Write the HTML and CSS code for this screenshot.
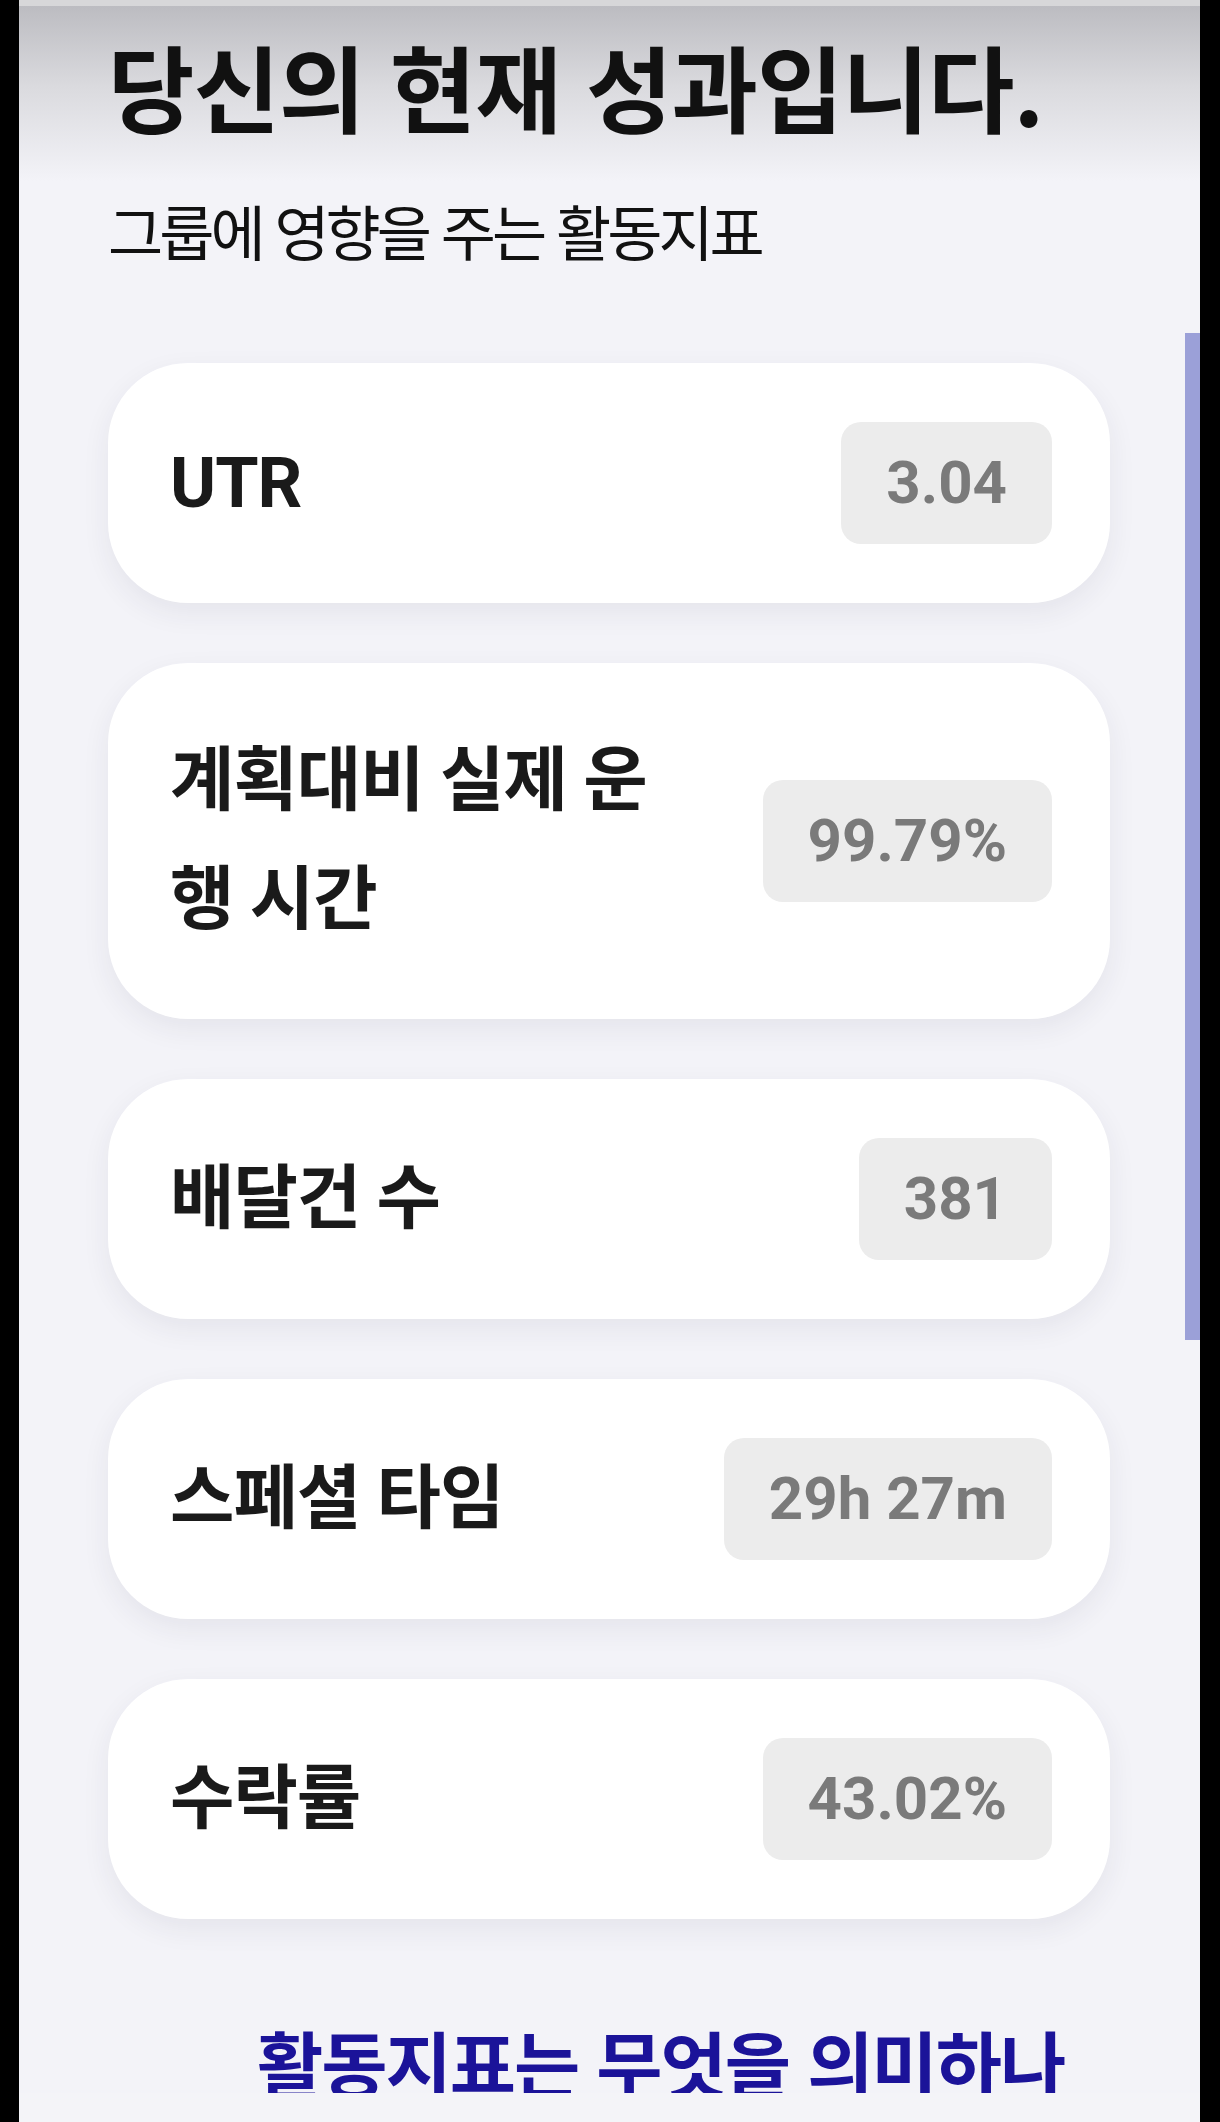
FILE: index.html
```html
<!DOCTYPE html>
<html lang="ko">
<head>
<meta charset="utf-8">
<title>성과</title>
<link rel="stylesheet" href="styles.css">
</head>
<body>
<div class="frame">
  <div class="status-strip"></div>
  <main class="scroller">
    <header class="intro">
      <h1 class="title">당신의 현재 성과입니다.</h1>
      <p class="subtitle">그룹에 영향을 주는 활동지표</p>
    </header>
    <section class="metrics">
      <article class="metric"><span class="metric-label">UTR</span><span class="metric-value">3.04</span></article>
      <article class="metric"><span class="metric-label">계획대비 실제 운행 시간</span><span class="metric-value">99.79%</span></article>
      <article class="metric"><span class="metric-label">배달건 수</span><span class="metric-value">381</span></article>
      <article class="metric"><span class="metric-label">스페셜 타임</span><span class="metric-value">29h 27m</span></article>
      <article class="metric"><span class="metric-label">수락률</span><span class="metric-value">43.02%</span></article>
    </section>
    <h2 class="explain">활동지표는 무엇을 의미하나</h2>
  </main>
  <div class="bottom-strip"></div>
  <div class="scroll-thumb"></div>
</div>
</body>
</html>
```
FILE: styles.css
```css
html, body {
  margin: 0;
  padding: 0;
  background: #000;
  height: 2122px;
  overflow: hidden;
}

.frame {
  position: relative;
  margin-left: 19px;
  width: 1181px;
  height: 2122px;
  display: flex;
  flex-direction: column;
  background: #f3f3f8;
}

.status-strip {
  height: 6px;
  flex-shrink: 0;
  background: #d7d7d9;
}

.scroller {
  flex: 1;
  min-height: 0;
  overflow: hidden;
  padding: 23px 90px 0 89px;
  background: linear-gradient(to bottom, #bcbcc1 0px, #dadade 80px, #f3f3f8 175px) no-repeat, #f3f3f8;
}

.bottom-strip {
  height: 29px;
  flex-shrink: 0;
  background: #f4f4f8;
}

.scroll-thumb {
  position: absolute;
  right: 0;
  top: 333px;
  width: 15px;
  height: 1007px;
  background: #9ba0d8;
}

.intro {
  display: flex;
  flex-direction: column;
}

.title {
  margin: 0;
  font-family: "Noto Sans CJK KR", "Noto Sans", sans-serif;
  font-weight: 700;
  font-size: 94px;
  line-height: 113px;
  letter-spacing: -1px;
  color: #111;
}

.subtitle {
  margin: 48px 0 0;
  font-family: "Noto Sans CJK KR", "Noto Sans", sans-serif;
  font-weight: 400;
  font-size: 60px;
  line-height: 80px;
  letter-spacing: -4px;
  color: #111;
}

.metrics {
  margin-top: 93px;
  display: flex;
  flex-direction: column;
  gap: 60px;
}

.metric {
  display: flex;
  align-items: center;
  justify-content: space-between;
  gap: 80px;
  padding: 59px 58px 59px 62px;
  background: #fff;
  border-radius: 80px;
  box-shadow: 0 10px 28px rgba(40, 40, 70, 0.07);
}

.metric-label {
  flex: 1;
  min-width: 0;
  font-family: Roboto, "Noto Sans CJK KR", sans-serif;
  font-weight: 700;
  font-size: 70px;
  line-height: 119px;
  letter-spacing: -1px;
  color: #1a1a1a;
}

.metric-value {
  flex-shrink: 0;
  padding: 30px 45px;
  border-radius: 20px;
  background: #ececec;
  font-family: Roboto, "Liberation Sans", sans-serif;
  font-weight: 700;
  font-size: 60px;
  line-height: 62px;
  color: #7a7a7a;
  white-space: nowrap;
}

.explain {
  margin: 88px 0 0 149px;
  font-family: "Noto Sans CJK KR", "Noto Sans", sans-serif;
  font-weight: 700;
  font-size: 72px;
  line-height: 108px;
  letter-spacing: -2px;
  color: #1b1399;
  white-space: nowrap;
}
```
